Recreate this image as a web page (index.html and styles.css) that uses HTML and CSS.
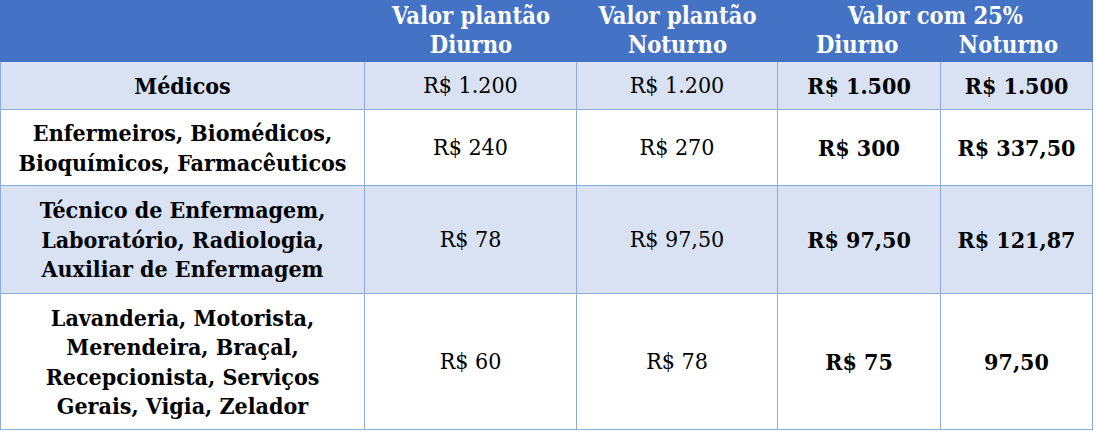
FILE: index.html
```html
<!DOCTYPE html>
<html lang="pt-BR">
<head>
<meta charset="utf-8">
<title>Valores de plantão</title>
<link rel="stylesheet" href="styles.css">
</head>
<body>
<div class="grid">
  <div class="hd"></div>
  <div class="hd">Valor plantão<br>Diurno</div>
  <div class="hd">Valor plantão<br>Noturno</div>
  <div class="hd hd-span">
    <div>Valor com 25%</div>
    <div class="hd-sub"><span>Diurno</span><span>Noturno</span></div>
  </div>

  <div class="c first alt b">Médicos</div>
  <div class="c alt">R$ 1.200</div>
  <div class="c alt">R$ 1.200</div>
  <div class="c alt b">R$ 1.500</div>
  <div class="c alt b">R$ 1.500</div>

  <div class="c first b">Enfermeiros, Biomédicos,<br>Bioquímicos, Farmacêuticos</div>
  <div class="c">R$ 240</div>
  <div class="c">R$ 270</div>
  <div class="c b">R$ 300</div>
  <div class="c b">R$ 337,50</div>

  <div class="c first alt b">Técnico de Enfermagem,<br>Laboratório, Radiologia,<br>Auxiliar de Enfermagem</div>
  <div class="c alt">R$ 78</div>
  <div class="c alt">R$ 97,50</div>
  <div class="c alt b">R$ 97,50</div>
  <div class="c alt b">R$ 121,87</div>

  <div class="c first b">Lavanderia, Motorista,<br>Merendeira, Braçal,<br>Recepcionista, Serviços<br>Gerais, Vigia, Zelador</div>
  <div class="c">R$ 60</div>
  <div class="c">R$ 78</div>
  <div class="c b">R$ 75</div>
  <div class="c b">97,50</div>
</div>
</body>
</html>
```

FILE: styles.css
```css
* { box-sizing: border-box; }
html, body { margin: 0; padding: 0; background: #fff; }
body {
  font-family: "DejaVu Serif", "Liberation Serif", serif;
  font-stretch: semi-condensed;
  font-size: 23px;
  line-height: 29.5px;
  color: #000;
}
.grid {
  display: grid;
  width: 1093px;
  grid-template-columns: 365px 212px 201px 163px 152px;
  grid-template-rows: 62px 48px 76px 108px 136px;
}
.hd {
  background: #4472c4;
  color: #fff;
  font-weight: bold;
  font-size: 23.5px;
  text-align: center;
  line-height: 29px;
  padding-top: 2px;
}
.hd-span { grid-column: 4 / span 2; }
.hd-sub {
  display: flex;
  justify-content: space-between;
  padding: 0 35px 0 38px;
}
.c {
  display: flex;
  align-items: center;
  justify-content: center;
  text-align: center;
  border-right: 1px solid #8eaadb;
  border-bottom: 1px solid #8eaadb;
}
.first { border-left: 1px solid #8eaadb; }
.alt { background: #d9e2f3; }
.b { font-weight: bold; }
```
